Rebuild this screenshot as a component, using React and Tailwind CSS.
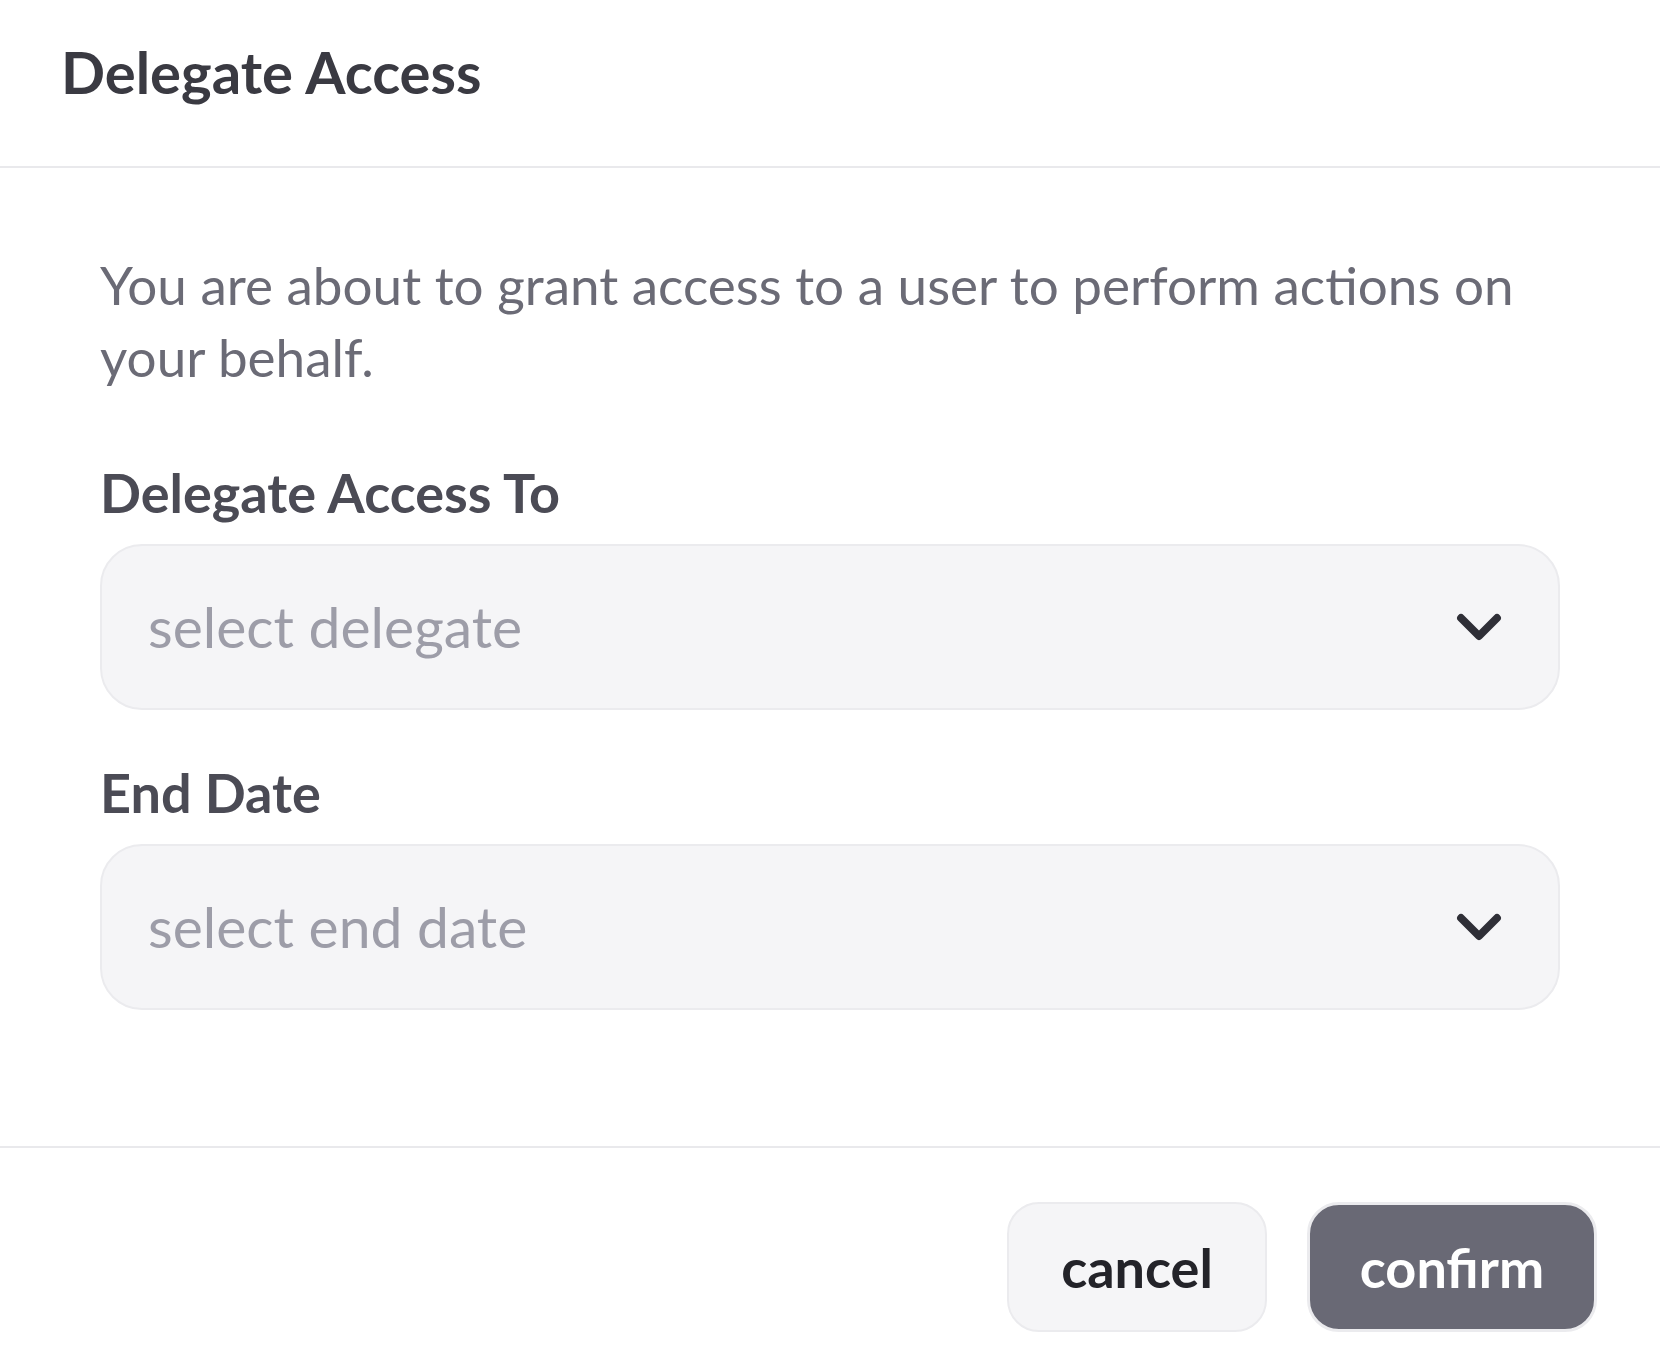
import React from "react";

function Chevron() {
  return (
    <svg width="72" height="72" viewBox="0 0 24 24" fill="none" stroke="#2f2f37" strokeWidth="2.6" strokeLinecap="round" strokeLinejoin="round">
      <path d="m6 9 6 6 6-6" />
    </svg>
  );
}

function SelectBox({ placeholder }) {
  return (
    <div className="flex h-[166px] items-center justify-between rounded-[42px] border-2 border-[#ebebee] bg-[#f5f5f7] pl-[46px] pr-[43px]">
      <span className="text-[57px] text-[#9d9da8]">{placeholder}</span>
      <Chevron />
    </div>
  );
}

export default function App() {
  return (
    <div className="flex h-[1364px] w-[1660px] flex-col bg-white font-['Lato','Noto_Sans',sans-serif]">
      <header className="flex h-[168px] shrink-0 items-center border-b-2 border-[#e9e9ec] px-[61px] pb-[22px]">
        <h1 className="text-[58px] font-bold leading-none text-[#3a3a42]">Delegate Access</h1>
      </header>
      <main className="flex flex-1 flex-col px-[100px] pt-[81px]">
        <p className="text-[53px] leading-[72px] text-[#6b6b76]">
          You are about to grant access to a user to perform actions on your behalf.
        </p>
        <label className="mt-[64px] text-[54px] font-bold leading-[72px] text-[#4b4b55]">Delegate Access To</label>
        <div className="mt-[15px]">
          <SelectBox placeholder="select delegate" />
        </div>
        <label className="mt-[47px] text-[54px] font-bold leading-[72px] text-[#4b4b55]">End Date</label>
        <div className="mt-[15px]">
          <SelectBox placeholder="select end date" />
        </div>
      </main>
      <footer className="flex h-[218px] shrink-0 items-start justify-end gap-[40px] border-t-2 border-[#e9e9ec] pr-[63px] pt-[54px]">
        <button className="flex h-[130px] w-[260px] items-center justify-center rounded-[32px] border-2 border-[#ebebee] bg-[#f5f5f7] text-[54px] font-bold text-[#232329]">
          cancel
        </button>
        <button className="flex h-[130px] w-[290px] items-center justify-center rounded-[32px] border-[3px] border-[#ebebee] bg-[#696975] text-[54px] font-bold text-white">
          confirm
        </button>
      </footer>
    </div>
  );
}
